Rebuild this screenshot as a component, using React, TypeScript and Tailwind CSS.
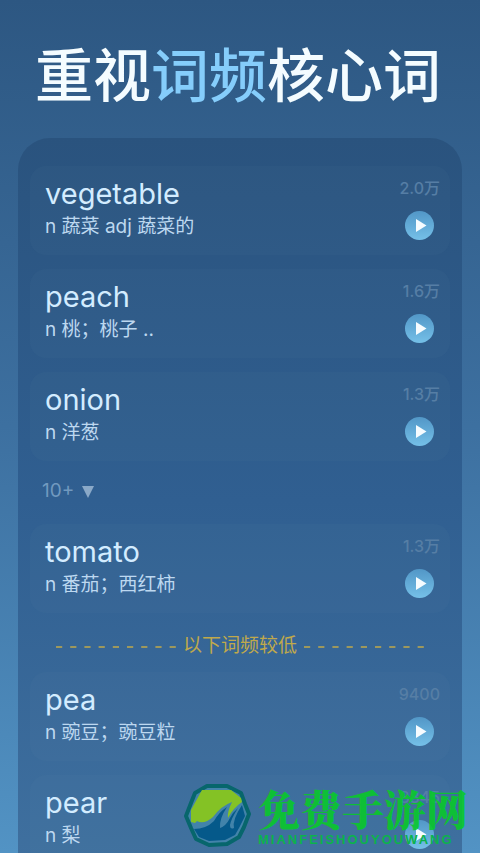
import { useState } from 'react';

type Word = {
  text: string;
  meaning: string;
  count: string;
};

const FREQUENT: Word[] = [
  { text: 'vegetable', meaning: 'n 蔬菜 adj 蔬菜的', count: '2.0万' },
  { text: 'peach', meaning: 'n 桃；桃子 ..', count: '1.6万' },
  { text: 'onion', meaning: 'n 洋葱', count: '1.3万' },
];

const MORE: Word[] = [{ text: 'tomato', meaning: 'n 番茄；西红柿', count: '1.3万' }];

const RARE: Word[] = [
  { text: 'pea', meaning: 'n 豌豆；豌豆粒', count: '9400' },
  { text: 'pear', meaning: 'n 梨', count: '8845' },
];

function WordCard({ word }: { word: Word }) {
  return (
    <li className="flex h-[89px] justify-between rounded-2xl bg-[#6f9aaf]/5 pt-[9px] pr-[10px] pl-[15px]">
      <div>
        <h2 className="text-[29px] leading-[38px] text-[#d3ecff]">{word.text}</h2>
        <p className="text-[19px] leading-[28px] text-[#bdd8f0]">{word.meaning}</p>
      </div>
      <div className="flex flex-col items-end gap-[11px] pt-[1px]">
        <span className="text-[16px] leading-6 font-medium text-[#567ea5]">{word.count}</span>
        <button
          type="button"
          aria-label={`Play ${word.text}`}
          className="mr-[6px] flex size-[29px] items-center justify-center rounded-full bg-linear-to-b from-[#5297c7] to-[#75c0e8]"
        >
          <svg viewBox="0 0 29 29" className="size-full" aria-hidden="true">
            <path d="M11 8 L21.5 14.5 L11 21 Z" fill="#f6fcff" />
          </svg>
        </button>
      </div>
    </li>
  );
}

function WordList({ words }: { words: Word[] }) {
  return (
    <ul className="flex flex-col gap-[14px]">
      {words.map((word) => (
        <WordCard key={word.text} word={word} />
      ))}
    </ul>
  );
}

function Dashes() {
  return (
    <svg viewBox="0 0 120 2" className="h-[2px] w-[120px]" aria-hidden="true">
      <path d="M0 1 H120" stroke="currentColor" strokeWidth="1.5" strokeDasharray="6.2 8" />
    </svg>
  );
}

function SiteLogo() {
  return (
    <svg viewBox="0 0 70 66" className="h-[66px] w-[70px] shrink-0" aria-hidden="true">
      <path
        d="M25 3 L45 3 L59 10 L63 21 L67 31 L62 44 L57 54 L45 61 L27 62 L14 56 L9 45 L4 33 L9 20 L13 10 Z"
        fill="#4283aa"
        stroke="#07666c"
        strokeWidth="4"
        strokeLinejoin="round"
      />
      <path
        d="M20 7 L49 7 L59 15 L60 19 Q51 25 46 35 Q45 29 50 19 Q39 23 31 34 Q22 42 15 38 L13 40 L9 39 L9 27 Z"
        fill="#84c225"
      />
      <path
        d="M12 46 Q24 46 32 38 Q37 29 45 24 Q37 36 38 45 Q44 43 48 35 Q51 29 56 25 Q49 36 48 42 Q48 47 52 45 Q50 37 60 22 L63 33 L57 45 L53 52 L43 57 L27 58 L17 54 Z"
        fill="#05598a"
      />
    </svg>
  );
}

export default function App() {
  const [open, setOpen] = useState(true);

  return (
    <main className="relative flex h-screen flex-col overflow-hidden bg-linear-to-b from-[#2d5782] via-[#3d70a0] to-[#5293c4] px-[18px] pt-8 font-['Inter','Noto_Sans_CJK_SC',sans-serif]">
      <h1 className="pr-1 text-center text-[58px] leading-[88px] font-medium whitespace-nowrap text-[#f4fcff]">
        重视<span className="text-[#85cdfb]">词频</span>核心词
      </h1>

      <section className="mt-[18px] grow rounded-t-[32px] bg-linear-to-b from-[#2a537e] via-[#305f91] to-[#3f709f] px-3 pt-7">
        <WordList words={FREQUENT} />
        <button
          type="button"
          aria-expanded={open}
          onClick={() => setOpen(!open)}
          className="flex h-[63px] items-center gap-2 px-3 pb-[2px] text-[19px] text-[#7199bf]"
        >
          10+
          <svg viewBox="0 0 12 12" className="size-3" aria-hidden="true">
            <path d="M0 0 H12 L6 12 Z" fill="#8aa9c8" />
          </svg>
        </button>
        {open && <WordList words={MORE} />}
        <div className="flex h-[59px] items-center justify-center gap-[7px] pt-2 text-[19px] whitespace-nowrap text-[#c0a94b]">
          <Dashes />
          以下词频较低
          <Dashes />
        </div>
        <WordList words={RARE} />
      </section>

      <div className="pointer-events-none absolute right-3 bottom-1 flex items-center gap-[6px]">
        <SiteLogo />
        <div className="flex flex-col">
          <span className="font-['Noto_Serif_CJK_SC','Noto_Sans_CJK_SC',serif] text-[42px] leading-[48px] font-black whitespace-nowrap text-[#08cb28]/90">
            免费手游网
          </span>
          <span className="font-['Liberation_Sans',sans-serif] text-[13px] leading-4 font-bold tracking-[2px] text-[#0bb34c]">
            MIANFEISHOUYOUWANG
          </span>
        </div>
      </div>
    </main>
  );
}
